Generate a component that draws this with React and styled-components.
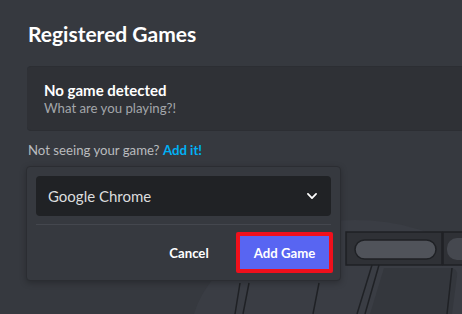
import React from 'react'
import styled, { createGlobalStyle } from 'styled-components'

const GlobalStyle = createGlobalStyle`
  html, body {
    margin: 0;
    padding: 0;
    background: #36393f;
  }
  body {
    font-family: Lato, "Open Sans", sans-serif;
    -webkit-font-smoothing: antialiased;
  }
`

const Page = styled.div`
  position: relative;
  width: 462px;
  height: 314px;
  overflow: hidden;
  background: #36393f;
  padding: 21px 0 0 27px;
  box-sizing: border-box;
`

const Backdrop = styled.svg`
  position: absolute;
  left: 0;
  top: 0;
  width: 462px;
  height: 314px;
  pointer-events: none;
`

const Content = styled.div`
  position: relative;
  display: flex;
  flex-direction: column;
`

const Title = styled.h2`
  margin: 0 0 0 1px;
  font-size: 21px;
  line-height: 25px;
  font-weight: 700;
  color: #ffffff;
`

const GameCard = styled.div`
  margin-top: 20px;
  margin-right: -27px;
  height: 65px;
  box-sizing: border-box;
  padding: 2px 17px 0;
  display: flex;
  flex-direction: column;
  justify-content: center;
  background: #2f3136;
  border-top: 1px solid #2c2e33;
  border-bottom: 1px solid #2c2e33;
  border-radius: 4px 0 0 4px;
`

const CardTitle = styled.div`
  font-size: 15px;
  line-height: 18px;
  font-weight: 700;
  color: #ffffff;
`

const CardSub = styled.div`
  font-size: 13.2px;
  line-height: 19px;
  color: #a3a6aa;
`

const Hint = styled.div`
  margin: 10px 0 0 1px;
  font-size: 13.2px;
  line-height: 18px;
  color: #b9bbbe;
`

const Link = styled.a`
  color: #00b0f4;
  font-weight: 700;
  text-decoration: none;
  cursor: pointer;
`

const Popout = styled.div`
  margin: 7px 0 0 -1px;
  width: 315px;
  box-sizing: border-box;
  padding: 9px 9px 7px;
  background: #36393f;
  border: 1px solid #2b2d32;
  border-radius: 4px;
  box-shadow: 0 2px 6px rgba(0, 0, 0, 0.25);
`

const Select = styled.div`
  height: 40px;
  box-sizing: border-box;
  padding: 0 12px;
  display: flex;
  align-items: center;
  justify-content: space-between;
  background: #202225;
  border-radius: 4px;
  color: #dcddde;
  font-size: 15px;
`

const Divider = styled.div`
  height: 1px;
  margin: 8px 0 7px;
  background: #44474e;
`

const Footer = styled.div`
  display: flex;
  justify-content: flex-end;
  align-items: center;
  gap: 12px;
  margin-right: -2px;
`

const Button = styled.button`
  font-family: inherit;
  font-size: 13.2px;
  font-weight: 700;
  color: #ffffff;
  cursor: pointer;
  box-sizing: border-box;
  height: 41px;
  width: ${p => (p.$primary ? '97px' : '70px')};
  padding: 0;
  border-radius: ${p => (p.$primary ? '2px' : '3px')};
  background: ${p => (p.$primary ? '#5865f2' : 'transparent')};
  border: ${p => (p.$primary ? '4px solid #f0101c' : '0')};
`

const Chevron = () => (
  <svg width="14" height="14" viewBox="0 0 24 24" fill="none" stroke="#ffffff" strokeWidth="3" strokeLinecap="round" strokeLinejoin="round">
    <path d="M5 8.5 L12 15.5 L19 8.5" />
  </svg>
)

const Illustration = () => (
  <Backdrop viewBox="0 0 462 314">
    <ellipse cx="355" cy="340" rx="165" ry="120" fill="#3a3d44" />
    {/* keyboard bar */}
    <rect x="346" y="232" width="96" height="33" fill="#2f3136" stroke="#1f2125" strokeWidth="1.5" />
    <rect x="355" y="240" width="81" height="19" rx="9.5" fill="#50535a" stroke="#1f2125" strokeWidth="1.5" />
    <rect x="443" y="232" width="40" height="33" fill="#2f3136" stroke="#1f2125" strokeWidth="1.5" />
    <rect x="447" y="238" width="40" height="22" rx="10" fill="#45484f" />
    {/* lower key */}
    <path d="M384 268 L450 268 Q458 268 457 276 L452 314 L370 314 Z" fill="#34373d" />
    <path d="M452 268 L447 314" stroke="#1f2125" strokeWidth="1.5" />
    {/* legs */}
    <path d="M372 265 L357 314 M379 265 L365 314" stroke="#1f2125" strokeWidth="1.5" />
    <path d="M240 283 L235 314 M249 283 L243 314 M319 283 L313 314" stroke="#1f2125" strokeWidth="1.5" />
  </Backdrop>
)

export default function App() {
  return (
    <>
      <GlobalStyle />
      <Page>
        <Illustration />
        <Content>
          <Title>Registered Games</Title>
          <GameCard>
            <CardTitle>No game detected</CardTitle>
            <CardSub>What are you playing?!</CardSub>
          </GameCard>
          <Hint>
            Not seeing your game? <Link>Add it!</Link>
          </Hint>
          <Popout>
            <Select>
              <span>Google Chrome</span>
              <Chevron />
            </Select>
            <Divider />
            <Footer>
              <Button>Cancel</Button>
              <Button $primary>Add Game</Button>
            </Footer>
          </Popout>
        </Content>
      </Page>
    </>
  )
}
